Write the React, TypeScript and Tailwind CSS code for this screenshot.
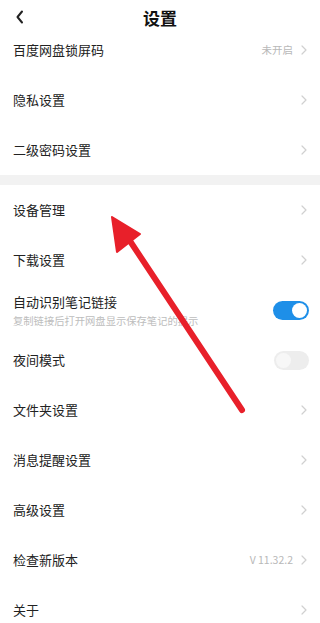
import React from "react";

const font = { fontFamily: '"Noto Sans CJK SC", "Noto Sans", sans-serif' };

function Chevron() {
  return (
    <svg width="6" height="10" viewBox="0 0 6 10" className="shrink-0">
      <path d="M1 1 L5 5 L1 9" fill="none" stroke="#d0d0d0" strokeWidth="1.2" strokeLinecap="round" strokeLinejoin="round" />
    </svg>
  );
}

function Row({ label, value }: { label: string; value?: string }) {
  return (
    <div className="h-[50px] flex items-center justify-between pl-[13px] pr-[13px] bg-white">
      <span className="text-[13px] leading-[18px] text-[#222]">{label}</span>
      <div className="flex items-center gap-[8px]">
        {value && <span className="text-[10.5px] text-[#b8b8b8]">{value}</span>}
        <Chevron />
      </div>
    </div>
  );
}

function Toggle({ on }: { on: boolean }) {
  return on ? (
    <div className="w-[36px] h-[19px] rounded-full bg-[#1e8fe8] flex items-center justify-end pr-[2px]">
      <div className="w-[15px] h-[15px] rounded-full bg-white" />
    </div>
  ) : (
    <div className="w-[35px] h-[19px] rounded-full bg-[#ededed] flex items-center pl-[2px]">
      <div className="w-[15px] h-[15px] rounded-full bg-[#f7f7f7]" />
    </div>
  );
}

export default function App() {
  return (
    <div className="relative w-[320px] h-[623px] overflow-hidden bg-white" style={font}>
      <div className="relative h-[25px]">
        <svg width="10" height="14" viewBox="0 0 10 14" className="absolute left-[15px] top-[10px]">
          <path d="M7 1.5 L2.5 7 L7 12.5" fill="none" stroke="#222" strokeWidth="2" strokeLinecap="round" strokeLinejoin="round" />
        </svg>
        <div className="absolute left-0 right-0 top-[7px] text-center text-[17px] leading-[22px] font-bold text-[#111]">设置</div>
      </div>
      <Row label="百度网盘锁屏码" value="未开启" />
      <Row label="隐私设置" />
      <Row label="二级密码设置" />
      <div className="h-[10px] bg-[#f2f2f2]" />
      <Row label="设备管理" />
      <Row label="下载设置" />
      <div className="h-[50px] flex items-center justify-between pl-[13px] pr-[11px]">
        <div className="flex flex-col">
          <span className="text-[13px] leading-[18px] text-[#222]">自动识别笔记链接</span>
          <span className="text-[10.3px] leading-[14px] text-[#bdbdbd] mt-[3px]">复制链接后打开网盘显示保存笔记的提示</span>
        </div>
        <Toggle on />
      </div>
      <div className="h-[50px] flex items-center justify-between pl-[13px] pr-[11px]">
        <span className="text-[13px] leading-[18px] text-[#222]">夜间模式</span>
        <Toggle on={false} />
      </div>
      <Row label="文件夹设置" />
      <Row label="消息提醒设置" />
      <Row label="高级设置" />
      <Row label="检查新版本" value="V 11.32.2" />
      <Row label="关于" />

      <svg className="absolute left-0 top-0 pointer-events-none" width="320" height="623" viewBox="0 0 320 623">
        <line x1="242" y1="410" x2="128" y2="238" stroke="#e8202a" strokeWidth="6" strokeLinecap="round" />
        <polygon points="112,217 140,234 117,252" fill="#e8202a" stroke="#e8202a" strokeWidth="2" strokeLinejoin="round" />
      </svg>
    </div>
  );
}
